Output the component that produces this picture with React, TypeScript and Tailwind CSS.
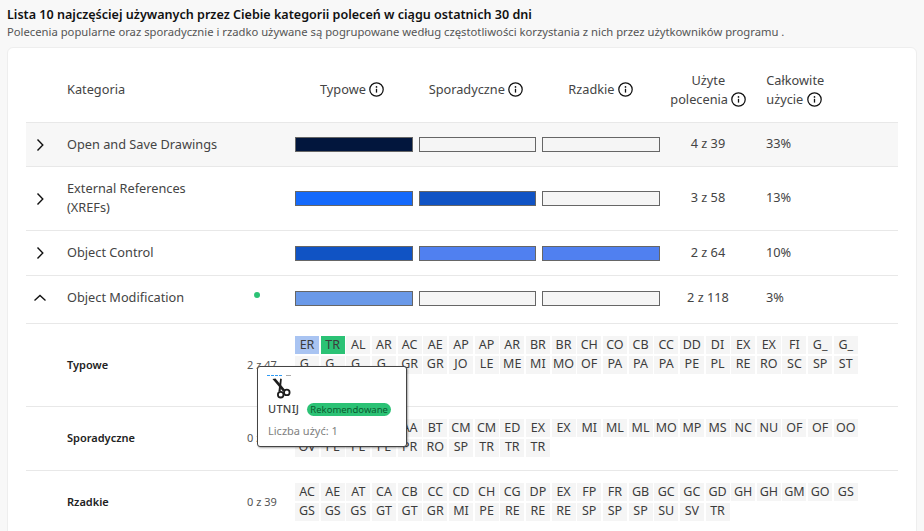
const font = "font-['Noto_Sans','Open_Sans',sans-serif]";

interface Category {
  name: string[];
  bars: string[];
  used: string;
  total: string;
  active?: boolean;
  open?: boolean;
  dot?: boolean;
  height: string;
}

const EMPTY = "bg-[#f5f5f5]";

const categories: Category[] = [
  { name: ["Open and Save Drawings"], bars: ["bg-[#02163d]", EMPTY, EMPTY], used: "4 z 39", total: "33%", active: true, height: "h-[44px]" },
  { name: ["External References", "(XREFs)"], bars: ["bg-[#1469fb]", "bg-[#1053c4]", EMPTY], used: "3 z 58", total: "13%", height: "h-[64px]" },
  { name: ["Object Control"], bars: ["bg-[#1053c4]", "bg-[#5080f0]", "bg-[#5080f0]"], used: "2 z 64", total: "10%", height: "h-[45px]" },
  { name: ["Object Modification"], bars: ["bg-[#6a99e8]", EMPTY, EMPTY], used: "2 z 118", total: "3%", open: true, dot: true, height: "h-[48px] pb-[3px]" },
];

const details = [
  {
    label: "Typowe",
    count: "2 z 47",
    height: "h-[83px]",
    tiles: "ER TR AL AR AC AE AP AP AR BR BR CH CO CB CC DD DI EX EX FI G_ G_ G_ G_ G_ G_ GR GR JO LE ME MI MO OF PA PA PA PE PL RE RO SC SP ST".split(" "),
  },
  {
    label: "Sporadyczne",
    count: "0 z 28",
    height: "h-[64px]",
    tiles: "3D AD AL AP AA BT CM CM ED EX EX MI ML ML MO MP MS NC NU OF OF OO OV PE PE PE PR RO SP TR TR TR".split(" "),
  },
  {
    label: "Rzadkie",
    count: "0 z 39",
    height: "h-[64px]",
    tiles: "AC AE AT CA CB CC CD CH CG DP EX FP FR GB GC GC GD GH GH GM GO GS GS GS GS GT GT GR MI PE RE RE RE SP SP SP SU SV TR".split(" "),
  },
];

function InfoIcon() {
  return (
    <svg className="inline-block h-[15px] w-[15px] align-[-3px]" viewBox="0 0 15 15" fill="none">
      <circle cx="7.5" cy="7.5" r="6.7" stroke="#111" strokeWidth="1.25" />
      <circle cx="7.5" cy="4.9" r="0.85" fill="#111" />
      <path d="M7.5 6.8v3.8" stroke="#111" strokeWidth="1.3" />
    </svg>
  );
}

function Chevron({ up }: { up?: boolean }) {
  return (
    <svg className="h-3 w-3" viewBox="0 0 12 12" fill="none" stroke="#111" strokeWidth="1.4">
      {up ? <path d="M0.5 8.5 6 3.5l5.5 5" /> : <path d="M3.5 0.5 8.8 6l-5.3 5.5" />}
    </svg>
  );
}

function ScissorsIcon() {
  return (
    <svg className="h-[26px] w-[26px]" viewBox="0 0 26 26" fill="none">
      <path d="M0 1.5h16" stroke="#2f9bf5" strokeWidth="1" strokeDasharray="3 1" />
      <path d="M19 1.5h5" stroke="#aaa" strokeWidth="1" />
      <path d="M5.5 5 8.5 4.6 18 15.8 16 17.6Z" fill="#1c1c1c" />
      <path d="M13.2 4.6 14.8 5 13.6 17.6 11.4 17.4Z" fill="#1c1c1c" />
      <circle cx="13.7" cy="20.7" r="2.8" stroke="#1c1c1c" strokeWidth="1.8" />
      <circle cx="19.8" cy="18.4" r="2.8" stroke="#1c1c1c" strokeWidth="1.8" />
    </svg>
  );
}

function Tile({ code, index }: { code: string; index: number }) {
  return (
    <span className={`flex h-[18px] w-[24px] items-center justify-center text-[12.5px] leading-none text-[#3c3c3c] ${index === 0 ? "bg-[#a9c4f2]" : index === 1 ? "bg-[#2bc275]" : "bg-[#f5f5f5]"}`}>
      {code}
    </span>
  );
}

export default function App() {
  return (
    <div className={`h-[531px] w-[924px] overflow-hidden bg-[#f8f8f8] ${font}`}>
      <div className="px-[7px] pt-[6px]">
        <h1 className="text-[12.57px] font-semibold leading-[18px] text-[#111]">
          Lista 10 najczęściej używanych przez Ciebie kategorii poleceń w ciągu ostatnich 30 dni
        </h1>
        <p className="mt-[-1px] text-[11.25px] leading-[18px] text-[#555]">
          Polecenia popularne oraz sporadycznie i rzadko używane są pogrupowane według częstotliwości korzystania z nich przez użytkowników programu .
        </p>
      </div>

      <div className="mx-[7px] mt-[6px] h-[500px] rounded-t-md border border-[#eeeeee] bg-white px-[18px]">
        <div className="flex h-[74px] items-center pt-[10px] text-[12.75px] text-[#444]">
          <div className="w-[41px]" />
          <div className="w-[228px]">Kategoria</div>
          <div className="w-[123.67px] pl-[25px]">Typowe <InfoIcon /></div>
          <div className="w-[123.67px] pl-[10px]">Sporadyczne <InfoIcon /></div>
          <div className="w-[118px] pl-[26px]">Rzadkie <InfoIcon /></div>
          <div className="w-[96px] text-center leading-[19px]">
            Użyte<br />polecenia <InfoIcon />
          </div>
          <div className="pl-[10px] leading-[19px]">
            Całkowite<br />użycie <InfoIcon />
          </div>
        </div>

        {categories.map((c) => (
          <div
            key={c.name[0]}
            className={`flex items-center border-t border-[#e8e8e8] text-[12.75px] text-[#444] ${c.height} ${c.active ? "bg-[#f7f7f7]" : ""}`}
          >
            <div className="w-[41px] pl-[8px]"><Chevron up={c.open} /></div>
            <div className="relative mt-[-1px] w-[228px] leading-[19px]">
              {c.name.map((line) => <div key={line}>{line}</div>)}
              {c.dot && <span className="absolute left-[187px] top-[4px] h-[6px] w-[6px] rounded-full bg-[#2bc275]" />}
            </div>
            <div className="flex gap-[6px]">
              {c.bars.map((bar, i) => (
                <span key={i} className={`h-[15px] w-[117.67px] border border-[#666] ${bar}`} />
              ))}
            </div>
            <div className="mt-[-1px] w-[96px] text-center">{c.used}</div>
            <div className="mt-[-1px] pl-[10px]">{c.total}</div>
          </div>
        ))}

        {details.map((d) => (
          <div key={d.label} className={`flex items-center border-t border-[#e8e8e8] ${d.height}`}>
            <div className="w-[41px]" />
            <div className="w-[180px] text-[11px] font-semibold text-[#222]">{d.label}</div>
            <div className="w-[48px] text-[11px] text-[#555]">{d.count}</div>
            <div className="flex w-[570px] flex-wrap gap-x-[1.67px] gap-y-[1.5px] self-start pt-[12px]">
              {d.tiles.map((code, i) => (
                <Tile key={i} code={code} index={d.label === "Typowe" ? i : -1} />
              ))}
            </div>
          </div>
        ))}
      </div>

      <div className="absolute left-[257px] top-[366px] h-[81px] w-[150px] rounded-[3px] border border-[#444] bg-white px-[9px] pt-[7px] shadow-[1px_1px_2px_rgba(0,0,0,0.35)]">
        <ScissorsIcon />
        <div className="mt-px flex items-center gap-[8px] pl-px">
          <span className="text-[11px] font-medium tracking-wide text-[#444]">UTNIJ</span>
          <span className="rounded-full bg-[#2bc275] px-[3px] text-[9.5px] leading-[13px] text-[#0b5a30]">Rekomendowane</span>
        </div>
        <div className="mt-[5px] pl-px text-[11px] text-[#808080]">Liczba użyć: 1</div>
      </div>
    </div>
  );
}
